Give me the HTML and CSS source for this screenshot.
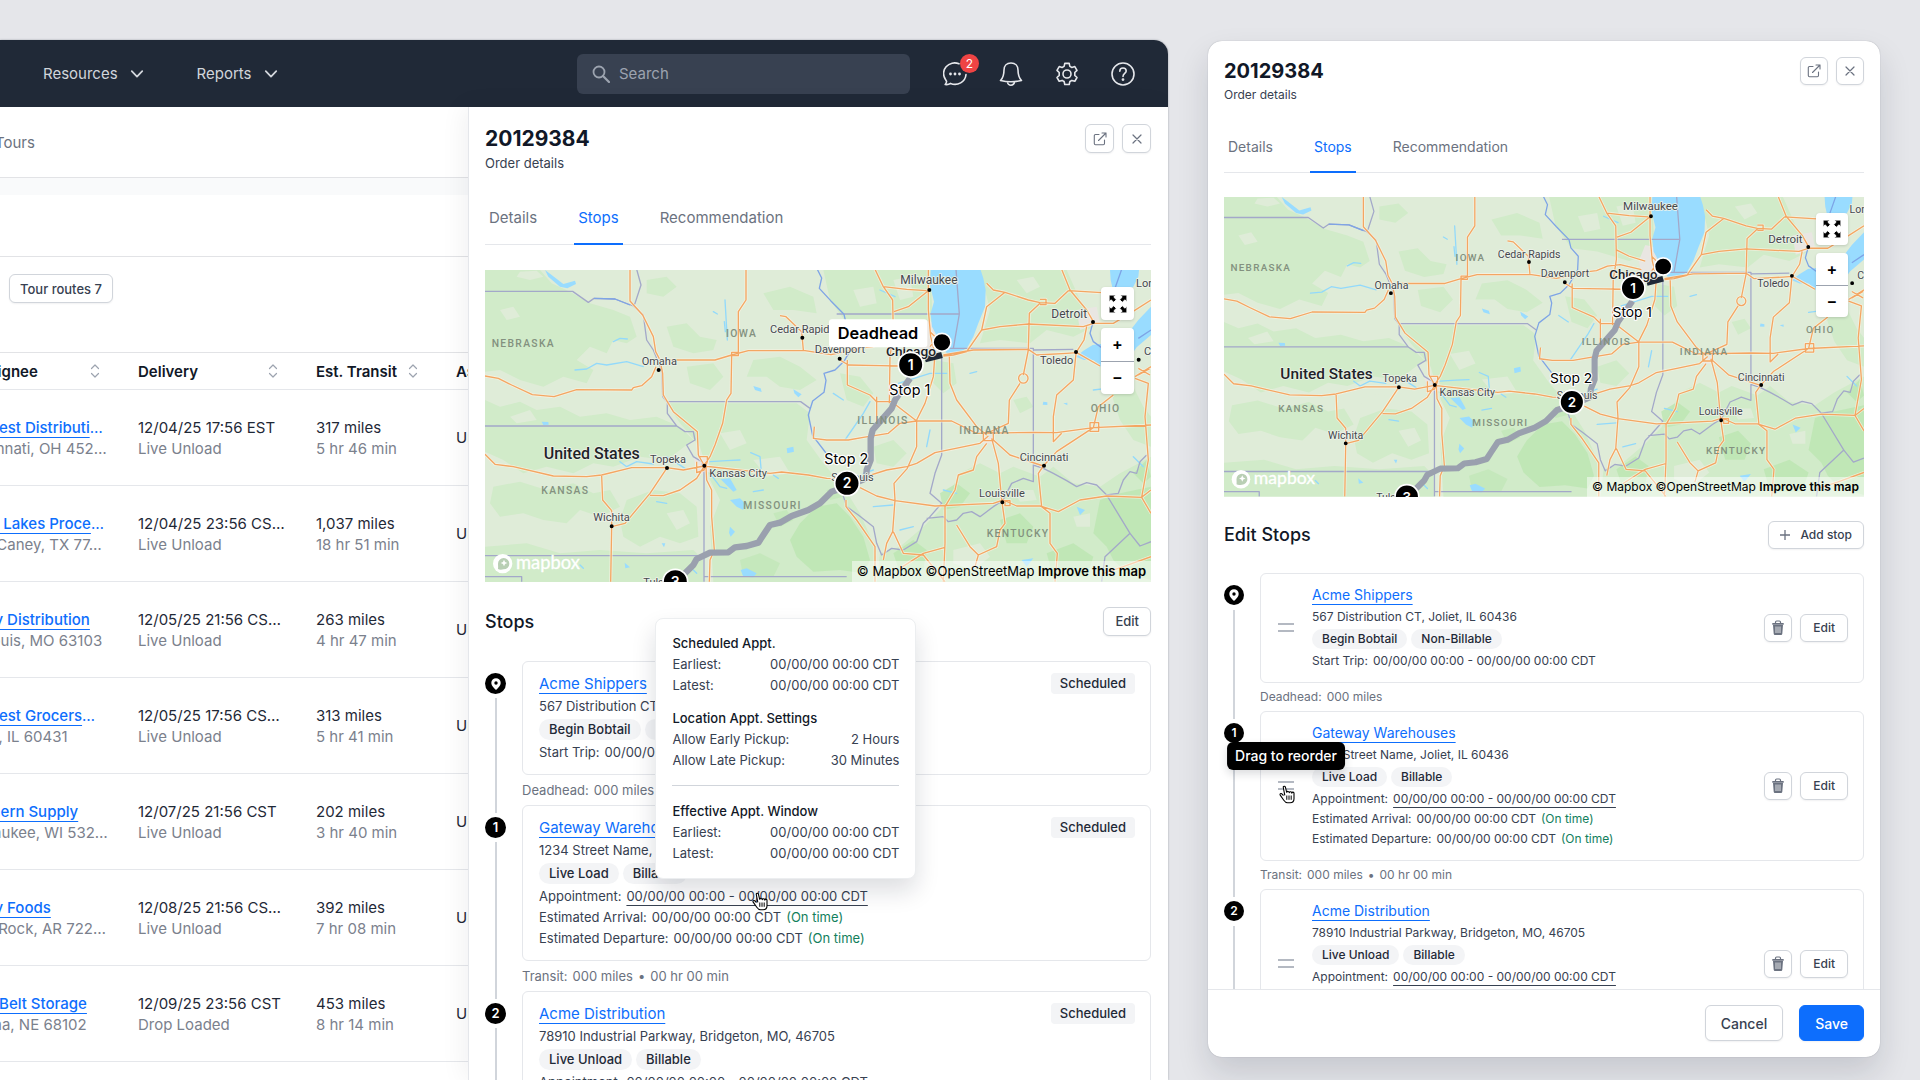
FILE: index.html
```html
<!DOCTYPE html>
<html lang="en">
<head>
<meta charset="utf-8">
<title>Order 20129384</title>
<link rel="stylesheet" href="styles.css">
</head>
<body>
<svg class="defs" aria-hidden="true">
  <symbol id="i-down" viewBox="0 0 12 12"><path d="M1.5 3.5 6 8.2l4.500-4.700" fill="none" stroke="currentColor" stroke-width="1.500" stroke-linecap="round" stroke-linejoin="round"/></symbol>
  <symbol id="i-sort" viewBox="0 0 10 16"><path d="M1.500 5.500 5 2l3.500 3.500M1.500 10.500 5 14l3.500-3.500" fill="none" stroke="currentColor" stroke-width="1.200" stroke-linecap="round" stroke-linejoin="round"/></symbol>
  <symbol id="i-open" viewBox="0 0 14 14"><path d="M6 2.500H2.500a1.200 1.200 0 0 0-1.200 1.200v7.800a1.200 1.200 0 0 0 1.200 1.200h7.800a1.200 1.200 0 0 0 1.200-1.200V8M9 1h4v4M13 1 5.500 8.500" fill="none" stroke="currentColor" stroke-width="1.100" stroke-linecap="round" stroke-linejoin="round"/></symbol>
  <symbol id="i-close" viewBox="0 0 14 14"><path d="m3 3 8 8M11 3l-8 8" fill="none" stroke="currentColor" stroke-width="1.200" stroke-linecap="round"/></symbol>
  <symbol id="i-expand" viewBox="0 0 18 18"><path d="M1 1h6L5.200 2.800 7.500 5.100 5.100 7.500 2.800 5.200 1 7zM17 1v6l-1.800-1.800-2.300 2.300-2.400-2.400 2.300-2.300L11 1zM1 17v-6l1.800 1.800 2.300-2.300 2.400 2.400-2.300 2.300L7 17zM17 17h-6l1.800-1.800-2.300-2.300 2.400-2.400 2.300 2.300L17 11z" fill="#000" stroke="#fff" stroke-width=".8"/></symbol>
  <symbol id="i-pin" viewBox="0 0 20 20"><path d="M10 4.200a4.700 4.700 0 0 0-4.700 4.700c0 2.800 2.700 5 4.700 7 2-2 4.700-4.200 4.700-7A4.700 4.700 0 0 0 10 4.200z" fill="#fff"/><circle cx="10" cy="9" r="1.700" fill="#000"/></symbol>
  <symbol id="i-trash" viewBox="0 0 14 16"><path d="M4.500 3V2.200C4.500 1.500 5 1 5.700 1h2.600c.7 0 1.200.5 1.200 1.200V3" fill="none" stroke="currentColor" stroke-width="1.200"/><path d="M1.300 3h11.400v1.700H1.300zM2 5h10l-.7 8.700c-.1.800-.7 1.300-1.500 1.300H4.200c-.8 0-1.400-.5-1.500-1.300z" fill="currentColor"/><path d="M5 6.500v6.500M7 6.500V13M9 6.500V13" stroke="#fff" stroke-width=".8"/></symbol>
  <symbol id="i-grip" viewBox="0 0 18 12"><path d="M1 2h16M1 9h16" stroke="#9ca3af" stroke-width="1.500" fill="none"/></symbol>
  <symbol id="i-hand" viewBox="0 0 18 20"><path d="M5.500 11.500 3.800 9.800C2.800 9 1.500 10 2.200 11.100l3.600 5.200c1.100 1.600 2 2.500 3.700 2.500h2.600c2.300 0 3.900-1.700 3.900-4V9.300c0-1.500-2-1.500-2.200-.2-.1-1.600-2.200-1.800-2.500-.5C11 7.200 9.200 7 8.700 8.300L7.400 3.200C7 1.700 5 2 5.300 3.500l1.500 7.800" fill="#fff" stroke="#000" stroke-width="1.100" stroke-linejoin="round"/><path d="M8.800 11.500v4.300M11 11.500v4.300M13.200 11.500v4.300" stroke="#000" stroke-width="1"/></symbol>

  <symbol id="land" viewBox="15 30 1998 936" preserveAspectRatio="none">
    <rect x="15" y="30" width="1998" height="936" fill="#dfecd8"/>
    <g fill="#d1ebc9">
      <path d="M15 30H180L215 70 270 95 330 130 400 150 450 170 470 230 440 250 400 240 380 280 330 260 290 300 340 330 320 370 250 350 190 380 120 360 60 330 15 335zM15 420 60 440 120 425 170 450 240 440 300 470 380 460 450 480 530 470 600 500 640 540 600 570 560 600 480 590 400 620 340 610 280 640 200 620 130 640 70 600 15 575zM40 680 120 665 200 690 280 670 340 700 390 690 420 740 360 770 300 750 260 790 190 780 130 760 60 770 30 730zM440 720 520 690 600 700 650 740 655 830 600 850 540 830 480 860 430 830 420 780z"/>
      <path d="M560 430H950L990 460 980 540 1030 610 1090 680 1140 760 1180 850 1190 966H700L690 800 720 720 690 660 660 560 600 490zM560 200 620 190 660 230 710 240 700 270 640 280 580 260zM820 300 900 290 960 320 1010 360 960 390 900 380 860 350 800 350zM620 320 700 310 730 350 690 390 630 370zM500 60 560 50 590 80 550 110 500 100zM850 100 930 80 1000 110 1010 160 940 150 880 150z"/>
      <path d="M15 860 140 850 240 880 360 870 500 880 640 870 670 900V966H15zM1030 30H1350L1360 200 1280 230 1180 200 1100 190 1050 120z"/>
      <path d="M1500 30H1760L1800 120 1840 200 1780 230 1700 210 1650 250 1560 240 1500 250 1530 150zM1360 300 1420 310 1430 370 1390 400 1360 370zM1440 640 1500 610 1560 640 1600 620 1680 650 1720 620 1780 670 1860 680 1920 640 2013 590V966H1190L1200 880 1260 860 1330 800 1380 750z"/>
      <path d="M1080 340 1140 350 1180 400 1150 440 1100 420zM1180 560 1240 540 1280 580 1240 620 1190 610zM1600 420 1640 410 1660 440 1620 460zM1880 360 1960 380 1990 440 2013 470V560L1960 540 1920 480 1900 420z"/>
    </g>
    <g fill="#bce6b1">
      <path d="M960 790 1010 740 1070 730 1110 770 1150 830 1170 900 1150 940 1080 930 1000 935 950 890 930 840zM1860 720 1920 700 2013 680V960L1940 940 1900 900 1880 860 1840 820zM1240 880 1300 840 1340 870 1330 930 1260 940zM1560 780 1620 760 1660 800 1640 850 1580 850zM1700 880 1780 850 1840 890 1820 950 1720 950zM1380 700 1430 670 1470 700 1440 740 1390 750zM2000 600 1960 640 1990 670 2013 650z" opacity=".8"/>
      <path d="M880 760 920 750 940 780 900 800zM780 900 840 880 900 910 880 950 790 950zM1040 690 1080 680 1090 710 1050 720z" opacity=".55"/>
    </g>
    <g fill="#dfecd8">
      <path d="M120 35 170 32 190 50 150 60 110 50zM60 150 100 140 120 170 80 180zM90 470 150 450 170 480 110 490zM440 640 520 650 540 690 480 690 430 670zM600 600 630 610 625 640 590 630zM720 520 780 510 800 550 750 570zM820 600 900 590 930 640 860 650zM560 760 610 750 630 790 590 810zM1420 870 1500 850 1530 890 1480 930 1420 910zM1600 690 1660 690 1670 720 1620 725zM1780 770 1830 760 1830 800 1790 800zM1120 90 1180 80 1190 130 1140 140zM1240 60 1290 50 1300 110 1260 120zM1610 60 1660 50 1680 80 1640 100z"/>
    </g>
    <g fill="#e9e6e2"><path d="M1330 180 1375 190 1385 260 1360 300 1320 290 1310 230zM1790 150 1850 140 1860 190 1800 210zM640 595 685 590 690 635 655 645zM1505 530 1540 525 1540 550 1510 552z"/></g>
    <g fill="#99dcff">
      <path d="M1352 30 1350 75 1362 125 1352 160 1356 200 1372 230 1390 262 1405 288 1432 285 1462 262 1480 230 1495 190 1515 140 1517 90 1510 55 1502 30zM1890 30 1892 60 1900 95 1925 105 1960 80 1975 50 1977 30zM1788 290 1810 272 1838 255 1880 250 1935 232 1975 180 2013 140V225L1970 262 1950 290 1920 318 1880 330 1865 322 1840 300 1812 300z"/>
      <path d="M195 30 215 45 250 72 285 62 288 72 262 85 240 80 205 50zM185 485 205 486 206 494 190 495zM820 378 842 385 845 396 825 390zM940 388 965 403 955 412 943 400zM750 720 780 715 795 730 790 750 770 740zM782 930 800 925 830 940 820 952 790 950zM750 800 765 815 752 830 747 818zM722 658 750 655 770 690 760 695zM920 565 940 560 942 575 922 580zM1625 900 1660 895 1640 920zM1790 740 1815 750 1800 765zM1690 425 1702 427 1702 435 1688 434zM1750 430 1762 428 1762 436zM545 850 556 850 552 862zM434 908 450 922 436 925z"/>
    </g>
    <g fill="none" stroke="#92d9fb" stroke-width="4" stroke-linecap="round" stroke-linejoin="round">
      <path d="M285 330 320 327 350 310 380 315 440 305 490 320M400 245 420 235 442 237M700 155 712 162M733 185 736 215M735 120 742 240M420 605 440 620 470 605 520 612M690 605 740 602 780 600M812 578 840 590 843 625M690 640 720 680 740 685M880 645 895 655M530 725 560 730M1060 400 1090 420M1095 540 1150 460 1170 425M1255 370 1350 340 1400 340M1180 740 1240 735M1350 510 1340 560M1200 90 1245 110M560 590 615 625M1470 340 1490 335M1390 690 1430 700M1260 810 1300 800M1840 390 1880 385M1960 590 1990 620M1150 640 1180 630M820 695 850 690M300 915 310 925M640 930 650 940"/>
    </g>
    <g fill="none" stroke="#a3a8c9" stroke-width="4" stroke-linejoin="round">
      <path d="M15 94H278L325 127 342 115 405 117 460 138 490 165 500 240 520 270 545 330 548 410 560 425H962L990 445M15 498H590L562 460V425M590 498 615 515 640 515 645 540 620 555 640 590 665 605 672 630V965M470 28 483 75 465 130 460 138M15 887H672M15 950H125V965M670 950H1100"/>
      <path d="M1079 673 1100 740 1135 765 1180 800 1190 850 1205 885 1235 865 1270 870 1310 845 1330 790 1350 770 1385 730 1350 700 1365 640 1385 585V285M1340 775 1390 770 1405 785 1430 780 1450 760 1475 755 1500 770 1520 755 1540 740 1568 722 1595 670 1630 655 1660 665V615L1690 625 1720 640 1760 662 1790 680 1820 668 1850 675 1880 705 1915 700 1930 660 1950 635 1970 640 1980 605 2000 585"/>
      <path d="M1070 162H1438L1428 28M1438 162 1420 265M1385 265H1660V610M1660 270 1780 268M1880 705 1950 820 1875 890 1865 965M1950 820 1980 858 2013 845"/>
    </g>
    <g fill="none" stroke="#7ea4e6" stroke-width="4" stroke-linejoin="round">
      <path d="M342 115 405 117 450 135M1012 28 1025 54 1018 85 1052 122 1092 163 1098 189 1121 215 1119 257 1092 304 1065 330 1032 340 1038 361 1032 397 998 423 985 465 998 527 1038 579M1925 28 1905 85M1838 190 1830 220 1840 245 1868 265M1975 235 2013 210"/>
    </g>
    <g id="roads" fill="none" stroke="#faf3e4" stroke-width="9" stroke-linejoin="round" opacity=".7"><use href="#road-lines"/></g>
    <g fill="none" stroke="#f4a662" stroke-width="4" stroke-linejoin="round"><path id="road-lines" d="M15 348 55 355 95 375 157 404 222 410 290 389 455 390 460 383 485 377 515 350 528 320M450 28V123L488 165 520 230 527 275 540 300 548 340 550 405 580 455 652 515 655 585 672 615M560 300H705L755 285 805 272H975L1053 284 1159 262 1178 260 1212 246 1252 241 1318 257M798 28V120L775 155V287H755V277H775M755 285 753 400 740 420 728 490 705 555 690 590 675 612M900 167 918 170 965 215 970 270M15 583 45 613 100 620 220 648 320 650 365 645 455 623H560L610 630 672 618 760 628 870 640 905 636 985 645 1040 655 1100 656M365 648 368 720 395 752V800L392 965M395 800 435 790 510 700 560 625M510 706 550 707 600 690 650 655 672 620M678 620 680 660 695 690V770L703 870 690 900 688 965M655 590H682V605L672 630 650 638V605M1003 500 1000 535 1040 540 1105 540 1150 532 1225 520 1260 490 1310 483M1185 28 1210 80 1238 120 1240 225 1230 290 1228 430M1210 80 1280 88 1340 92M1242 155 1285 140 1345 92M1345 28V150L1352 230 1365 280 1360 350 1335 430 1310 480 1310 560 1282 625 1242 670 1245 720 1238 815 1220 850 1210 900M1240 195 1280 215 1330 230M1080 300 1105 315 1200 317 1260 318M1102 300V375L1170 405 1190 425 1235 425 1310 483 1415 483 1490 520 1660 517 1730 518 1840 503 2013 495M1190 410V500M1520 70 1540 90 1575 97 1645 120 1680 128 1725 130 1765 92M1745 28 1770 90 1820 150 1840 185M1765 92 1865 98M1575 97 1520 140 1505 210 1460 275 1420 285 1390 288M1505 210 1560 200 1645 192 1810 200 1840 190 1900 190 1950 160 2013 120M1680 130 1648 160 1645 270 1630 345M1620 370 1588 420 1585 490 1520 520M1390 285 1480 270 1645 268 1670 285 1760 280 1790 278 1860 318M1788 280 1780 360 1730 405 1720 470V545L1745 520M1820 200 1812 240 1790 275M1408 290 1410 370 1430 420 1490 500 1520 525M1310 610 1365 578 1500 550 1525 528M1520 550 1490 590 1480 630 1435 645 1425 690 1395 740V850L1390 965M1535 535 1555 610 1565 720 1575 790 1560 810 1550 860 1495 885 1470 860 1430 795M1540 540 1590 585 1690 618 1730 575 1840 503 1855 440 1900 405M1690 618 1675 640 1685 740 1710 760V850L1732 880 1725 965M1140 683 1190 708 1245 722 1365 738 1540 730 1570 720 1610 738 1680 738 1735 755 1800 720 1880 708 1985 712 2013 690M1985 712 2013 760M1140 655 1220 630 1280 620 1310 610M1098 720V740L1130 780 1185 860V965M1240 815 1270 880 1330 885 1395 965M1260 925 1330 880 1395 862M1495 885 1485 920M1965 350 2013 320M1965 355 2005 370 1995 470 2005 600 1985 712M1640 345A13 13 0 1 1 1620 365 13 13 0 0 1 1640 345M1830 488h26v26h-26zM1510 518h30v24h-30zM1575 722h15v15h-15zM1680 118h18v16h-18M1975 325 2010 345M1975 345 2010 325M1350 215 1370 235 1350 260M1870 940 1930 920 2013 890"/></g>
    <g fill="none" stroke="#9aa0ae" stroke-width="19" stroke-linejoin="round"><path d="M1290 355 1245 420 1235 445 1178 510 1172 535V600L1160 630 1158 655 1135 665"/><path d="M1085 685 1055 695 1020 730 985 750 935 768 900 788 870 795 850 825 835 848 800 858 765 862 745 877 690 878 650 897 640 915 615 940"/></g>
    <path d="M1335 298 1386 285" stroke="#1f2937" stroke-width="18"/>
  </symbol>
</svg>

<main class="stage">
  <section class="app">
    <header class="topbar">
      <nav class="menus" aria-label="Main">
        <button class="menu" type="button">Resources <svg width="14" height="14"><use href="#i-down"/></svg></button>
        <button class="menu" type="button">Reports <svg width="14" height="14"><use href="#i-down"/></svg></button>
      </nav>
      <label class="search">
        <svg width="18" height="18" viewBox="0 0 18 18" fill="none" stroke="currentColor" aria-hidden="true"><circle cx="7" cy="7" r="5.500" stroke-width="1.800"/><path d="m11 11 6 6" stroke-width="2.200" stroke-linecap="round"/></svg>
        <input type="search" placeholder="Search" aria-label="Search">
      </label>
      <div class="tools">
        <button class="tool" type="button" aria-label="Messages">
          <svg width="24" height="24" viewBox="0 0 24 24" fill="none" stroke="currentColor" stroke-width="1.600" stroke-linecap="round" stroke-linejoin="round"><path d="M16 1.800A11 10.600 0 0 0 2.500 17.500L3.600 19.300a5 5 0 0 1-1.400 3.200c2 .3 4-.1 5.300-1.100A11 10.600 0 0 0 23 12.500"/><g fill="currentColor" stroke="none"><circle cx="7.500" cy="12" r="1.400"/><circle cx="12" cy="12" r="1.400"/><circle cx="16.500" cy="12" r="1.400"/></g></svg>
          <span class="badge">2</span>
        </button>
        <button class="tool" type="button" aria-label="Notifications"><svg width="24" height="24" viewBox="0 0 24 24" fill="none" stroke="currentColor" stroke-width="1.600" stroke-linecap="round" stroke-linejoin="round"><path d="M12 1C7.500 1 5 4.200 5 8c0 5-1 8-3.500 10.500 6.500 1.500 14.500 1.500 21 0C20 16 19 13 19 8c0-3.800-2.500-7-7-7zM8.500 19.700a3.500 3.500 0 0 0 7 0"/></svg></button>
        <button class="tool" type="button" aria-label="Settings"><svg width="24" height="24" viewBox="0 0 24 24" fill="none" stroke="currentColor" stroke-width="1.600" stroke-linejoin="round"><path d="M9.800 1h4.400l.7 3 2 1.100 2.900-.9 2.200 3.800-2.200 2.100V13l2.200 2.100-2.200 3.800-2.900-.9-2 1.100-.7 3H9.800l-.7-3-2-1.100-2.900.9L2 15.100 4.200 13v-2.900L2 8l2.200-3.800 2.900.9 2-1.100z" transform="translate(0 .4)"/><circle cx="12" cy="12" r="4"/></svg></button>
        <button class="tool" type="button" aria-label="Help"><svg width="24" height="24" viewBox="0 0 24 24" fill="none" stroke="currentColor" stroke-width="1.600" stroke-linecap="round"><circle cx="12" cy="12" r="11"/><path d="M8.800 9.200C8.800 7.200 10.200 6 12 6s3.200 1.200 3.200 3c0 2.400-3.200 2.600-3.200 5.400"/><circle cx="12" cy="17.600" r=".6" fill="currentColor"/></svg></button>
      </div>
    </header>

    <div class="workspace">
      <div class="orders">
        <div class="orders-tabs"><a href="#tours">Tours</a></div>
        <div class="band"></div>
        <div class="summary"></div>
        <div class="filters"><button class="btn" type="button">Tour routes 7</button></div>
        <table class="grid">
          <colgroup><col class="c-wide"><col class="c-wide"><col class="c-mid"><col class="c-mid"></colgroup>
          <thead><tr>
            <th><span class="th">Consignee <svg width="10" height="16"><use href="#i-sort"/></svg></span></th>
            <th><span class="th">Delivery <svg width="10" height="16"><use href="#i-sort"/></svg></span></th>
            <th><span class="th">Est. Transit <svg width="10" height="16"><use href="#i-sort"/></svg></span></th>
            <th><span class="th">Assigned</span></th>
          </tr></thead>
          <tbody>
            <tr><td><a class="link" href="#c1">Midwest Distributi</a><span class="more">…</span><p>Cincinnati, OH 452…</p></td><td>12/04/25 17:56 EST<p>Live Unload</p></td><td>317 miles<p>5 hr 46 min</p></td><td>Unassigned</td></tr>
            <tr><td><a class="link" href="#c2">Great Lakes Proce</a><span class="more">…</span><p>New Caney, TX 77…</p></td><td>12/04/25 23:56 CS…<p>Live Unload</p></td><td>1,037 miles<p>18 hr 51 min</p></td><td>Unassigned</td></tr>
            <tr><td><a class="link" href="#c3">Valley Distribution</a><p>St. Louis, MO 63103</p></td><td>12/05/25 21:56 CS…<p>Live Unload</p></td><td>263 miles<p>4 hr 47 min</p></td><td>Unassigned</td></tr>
            <tr><td><a class="link" href="#c4">Midwest Grocers</a><span class="more">…</span><p>Joliet, IL 60431</p></td><td>12/05/25 17:56 CS…<p>Live Unload</p></td><td>313 miles<p>5 hr 41 min</p></td><td>Unassigned</td></tr>
            <tr><td><a class="link" href="#c5">Northern Supply</a><p>Milwaukee, WI 532…</p></td><td>12/07/25 21:56 CST<p>Live Unload</p></td><td>202 miles<p>3 hr 40 min</p></td><td>Unassigned</td></tr>
            <tr><td><a class="link" href="#c6">Valley Foods</a><p>Little Rock, AR 722…</p></td><td>12/08/25 21:56 CS…<p>Live Unload</p></td><td>392 miles<p>7 hr 08 min</p></td><td>Unassigned</td></tr>
            <tr><td><a class="link" href="#c7">Corn Belt Storage</a><p>Omaha, NE 68102</p></td><td>12/09/25 23:56 CST<p>Drop Loaded</p></td><td>453 miles<p>8 hr 14 min</p></td><td>Unassigned</td></tr>
          </tbody>
        </table>
      </div>

      <aside class="panel panel-view">
        <header class="panel-head">
          <div><h1>20129384</h1><p class="sub">Order details</p></div>
          <div class="actions">
            <button class="btn square" type="button" aria-label="Open in new window"><svg width="14" height="14"><use href="#i-open"/></svg></button>
            <button class="btn square" type="button" aria-label="Close"><svg width="14" height="14"><use href="#i-close"/></svg></button>
          </div>
        </header>
        <nav class="tabs" aria-label="Order sections"><a href="#details">Details</a><a class="on" href="#stops">Stops</a><a href="#rec">Recommendation</a></nav>
        <div class="map">
          <svg class="map-art" viewBox="15 30 1998 936" role="img" aria-label="Route map">
            <use href="#land" x="15" y="30" width="1998" height="936"/>
            <g class="state"><text x="35" y="261">NEBRASKA</text><text x="738" y="231">IOWA</text><text x="184" y="702">KANSAS</text><text x="790" y="746">MISSOURI</text><text x="1132" y="491">ILLINOIS</text><text x="1438" y="522">INDIANA</text><text x="1832" y="455">OHIO</text><text x="1520" y="831">KENTUCKY</text></g>
            <g class="dots"><path d="M967 233v.1M536 330v.1M561 624v.1M673 617v.1M395 799v.1M1079 296v.1M1348 90v.1M1839 186v.1M1788 276v.1M1976 299v.1M1692 617v.1M1567 727v.1"/></g>
            <g class="city"><text x="870" y="219">Cedar Rapids</text><text x="485" y="316">Omaha</text><text x="510" y="609">Topeka</text><text x="688" y="651">Kansas City</text><text x="340" y="784">Wichita</text><text x="1004" y="279">Davenport</text><text x="1680" y="312">Toledo</text><text x="1968" y="81">London</text><text x="1992" y="285">Cleveland</text><text x="1619" y="603">Cincinnati</text><text x="1497" y="712">Louisville</text><text x="1054" y="662">St. Louis</text><text x="490" y="978">Tulsa</text></g>
            <g class="city metro"><text x="1261" y="71">Milwaukee</text><text x="1714" y="174">Detroit</text></g>
            <g class="big"><text x="191" y="597">United States</text><text class="chi" x="1218" y="287">Chicago</text></g>
            <g class="stopname"><text x="1228" y="404">Stop 1</text><text x="1033" y="611">Stop 2</text></g>
            <g class="mark"><circle cx="1386" cy="247" r="27"/><circle cx="1292" cy="314" r="37"/><circle cx="1101" cy="670" r="37"/><circle cx="586" cy="965" r="37"/></g>
            <g class="marknum"><text x="1292" y="329">1</text><text x="1101" y="685">2</text><text x="586" y="982">3</text></g>
            <rect class="tag" x="1047" y="178" width="295" height="84" rx="9"/><text class="tagtext" x="1194" y="237">Deadhead</text>
            <g class="logo"><circle cx="68" cy="911" r="29"/><path d="M54 911a17 17 0 1 1 17 17c-6 2-13 2-17-1 1-5 0-11 0-16z"/><path class="star" d="m72 899 3 7 7 3-7 3-3 7-3-7-7-3 7-3z"/><text x="108" y="926">mapbox</text></g>
          </svg>
          <div class="map-controls">
            <button type="button" aria-label="Full screen"><svg width="20" height="20"><use href="#i-expand"/></svg></button>
            <div class="zoom"><button type="button">+</button><button type="button">−</button></div>
          </div>
          <p class="credit"><a href="#m">© Mapbox</a> <a href="#o">©OpenStreetMap</a> <a class="improve" href="#i">Improve this map</a></p>
        </div>
        <div class="section-head"><h2>Stops</h2><button class="btn" type="button">Edit</button></div>
        <ol class="stops">
          <li>
            <span class="node"><svg width="20" height="20"><use href="#i-pin"/></svg></span>
            <article class="card"><div class="info">
              <h3><a class="link" href="#s0">Acme Shippers</a></h3><p>567 Distribution CT, Joliet, IL 60436</p>
              <div class="chips"><span>Begin Bobtail</span><span>Non-Billable</span></div>
              <div class="times"><p><span>Start Trip:</span><span>00/00/00 00:00 - 00/00/00 00:00 CDT</span></p></div>
            </div><span class="status">Scheduled</span></article>
            <p class="leg"><span>Deadhead:</span><span>000 miles</span></p>
          </li>
          <li>
            <span class="node">1</span>
            <article class="card"><div class="info">
              <h3><a class="link" href="#s1">Gateway Warehouses</a></h3><p>1234 Street Name, Joliet, IL 60436</p>
              <div class="chips"><span>Live Load</span><span>Billable</span></div>
              <div class="times">
                <div class="row"><span>Appointment:</span><span class="anchor"><span class="appt">00/00/00 00:00 - 00/00/00 00:00 CDT</span>
                  <span class="popover" role="tooltip">
                    <span class="group"><b>Scheduled Appt.</b><span class="pair"><span>Earliest:</span><span>00/00/00 00:00 CDT</span></span><span class="pair"><span>Latest:</span><span>00/00/00 00:00 CDT</span></span></span>
                    <span class="group"><b>Location Appt. Settings</b><span class="pair"><span>Allow Early Pickup:</span><span>2 Hours</span></span><span class="pair"><span>Allow Late Pickup:</span><span>30 Minutes</span></span></span>
                    <span class="group ruled"><b>Effective Appt. Window</b><span class="pair"><span>Earliest:</span><span>00/00/00 00:00 CDT</span></span><span class="pair"><span>Latest:</span><span>00/00/00 00:00 CDT</span></span></span>
                  </span>
                  <svg class="hand" width="18" height="20"><use href="#i-hand"/></svg></span></div>
                <p><span>Estimated Arrival:</span><span>00/00/00 00:00 CDT</span><span class="ok">(On time)</span></p>
                <p><span>Estimated Departure:</span><span>00/00/00 00:00 CDT</span><span class="ok">(On time)</span></p>
              </div>
            </div><span class="status">Scheduled</span></article>
            <p class="leg"><span>Transit:</span><span>000 miles</span><span>•</span><span>00 hr 00 min</span></p>
          </li>
          <li>
            <span class="node">2</span>
            <article class="card"><div class="info">
              <h3><a class="link" href="#s2">Acme Distribution</a></h3><p>78910 Industrial Parkway, Bridgeton, MO, 46705</p>
              <div class="chips"><span>Live Unload</span><span>Billable</span></div>
              <div class="times"><p><span>Appointment:</span><span class="appt">00/00/00 00:00 - 00/00/00 00:00 CDT</span></p></div>
            </div><span class="status">Scheduled</span></article>
            <p class="leg"></p>
          </li>
        </ol>
      </aside>
    </div>
  </section>

  <aside class="sheet">
    <div class="panel panel-edit">
      <header class="panel-head">
        <div><h1>20129384</h1><p class="sub">Order details</p></div>
        <div class="actions">
          <button class="btn square" type="button" aria-label="Open in new window"><svg width="14" height="14"><use href="#i-open"/></svg></button>
          <button class="btn square" type="button" aria-label="Close"><svg width="14" height="14"><use href="#i-close"/></svg></button>
        </div>
      </header>
      <nav class="tabs" aria-label="Order sections"><a href="#details">Details</a><a class="on" href="#stops">Stops</a><a href="#rec">Recommendation</a></nav>
      <div class="map">
        <svg class="map-art" viewBox="15 30 1998 936" role="img" aria-label="Route map">
          <use href="#land" x="15" y="30" width="1998" height="936"/>
          <g class="state"><text x="35" y="261">NEBRASKA</text><text x="738" y="231">IOWA</text><text x="184" y="702">KANSAS</text><text x="790" y="746">MISSOURI</text><text x="1132" y="491">ILLINOIS</text><text x="1438" y="522">INDIANA</text><text x="1832" y="455">OHIO</text><text x="1520" y="831">KENTUCKY</text></g>
          <g class="dots"><path d="M967 233v.1M536 330v.1M561 624v.1M673 617v.1M395 799v.1M1079 296v.1M1348 90v.1M1839 186v.1M1788 276v.1M1976 299v.1M1692 617v.1M1567 727v.1"/></g>
          <g class="city"><text x="870" y="219">Cedar Rapids</text><text x="485" y="316">Omaha</text><text x="510" y="609">Topeka</text><text x="688" y="651">Kansas City</text><text x="340" y="784">Wichita</text><text x="1004" y="279">Davenport</text><text x="1680" y="312">Toledo</text><text x="1968" y="81">London</text><text x="1992" y="285">Cleveland</text><text x="1619" y="603">Cincinnati</text><text x="1497" y="712">Louisville</text><text x="1054" y="662">St. Louis</text><text x="490" y="978">Tulsa</text></g>
          <g class="city metro"><text x="1261" y="71">Milwaukee</text><text x="1714" y="174">Detroit</text></g>
          <g class="big"><text x="191" y="597">United States</text><text class="chi" x="1218" y="287">Chicago</text></g>
          <g class="stopname"><text x="1228" y="404">Stop 1</text><text x="1033" y="611">Stop 2</text></g>
          <g class="mark"><circle cx="1386" cy="247" r="27"/><circle cx="1292" cy="314" r="37"/><circle cx="1101" cy="670" r="37"/><circle cx="586" cy="965" r="37"/></g>
          <g class="marknum"><text x="1292" y="329">1</text><text x="1101" y="685">2</text><text x="586" y="982">3</text></g>
          <g class="logo"><circle cx="68" cy="911" r="29"/><path d="M54 911a17 17 0 1 1 17 17c-6 2-13 2-17-1 1-5 0-11 0-16z"/><path class="star" d="m72 899 3 7 7 3-7 3-3 7-3-7-7-3 7-3z"/><text x="108" y="926">mapbox</text></g>
        </svg>
        <div class="map-controls">
          <button type="button" aria-label="Full screen"><svg width="20" height="20"><use href="#i-expand"/></svg></button>
          <div class="zoom"><button type="button">+</button><button type="button">−</button></div>
        </div>
        <p class="credit"><a href="#m">© Mapbox</a> <a href="#o">©OpenStreetMap</a> <a class="improve" href="#i">Improve this map</a></p>
      </div>
      <div class="section-head"><h2>Edit Stops</h2><button class="btn add" type="button"><svg width="10" height="10" viewBox="0 0 10 10"><path d="M5 0v10M0 5h10" stroke="#6b7280" stroke-width="1.300"/></svg>Add stop</button></div>
      <ol class="stops">
        <li>
          <span class="node"><svg width="20" height="20"><use href="#i-pin"/></svg></span>
          <article class="card"><span class="grip"><svg width="18" height="12"><use href="#i-grip"/></svg></span><div class="info">
            <h3><a class="link" href="#e0">Acme Shippers</a></h3><p>567 Distribution CT, Joliet, IL 60436</p>
            <div class="chips"><span>Begin Bobtail</span><span>Non-Billable</span></div>
            <div class="times"><p><span>Start Trip:</span><span>00/00/00 00:00 - 00/00/00 00:00 CDT</span></p></div>
          </div><div class="actions"><button class="btn square" type="button" aria-label="Delete stop"><svg width="14" height="16"><use href="#i-trash"/></svg></button><button class="btn" type="button">Edit</button></div></article>
          <p class="leg"><span>Deadhead:</span><span>000 miles</span></p>
        </li>
        <li>
          <span class="node">1</span>
          <article class="card"><span class="grip"><svg width="18" height="12"><use href="#i-grip"/></svg><span class="tip" role="tooltip">Drag to reorder</span><svg class="hand" width="18" height="20"><use href="#i-hand"/></svg></span><div class="info">
            <h3><a class="link" href="#e1">Gateway Warehouses</a></h3><p>1234 Street Name, Joliet, IL 60436</p>
            <div class="chips"><span>Live Load</span><span>Billable</span></div>
            <div class="times">
              <p><span>Appointment:</span><span class="appt">00/00/00 00:00 - 00/00/00 00:00 CDT</span></p>
              <p><span>Estimated Arrival:</span><span>00/00/00 00:00 CDT</span><span class="ok">(On time)</span></p>
              <p><span>Estimated Departure:</span><span>00/00/00 00:00 CDT</span><span class="ok">(On time)</span></p>
            </div>
          </div><div class="actions"><button class="btn square" type="button" aria-label="Delete stop"><svg width="14" height="16"><use href="#i-trash"/></svg></button><button class="btn" type="button">Edit</button></div></article>
          <p class="leg"><span>Transit:</span><span>000 miles</span><span>•</span><span>00 hr 00 min</span></p>
        </li>
        <li>
          <span class="node">2</span>
          <article class="card"><span class="grip"><svg width="18" height="12"><use href="#i-grip"/></svg></span><div class="info">
            <h3><a class="link" href="#e2">Acme Distribution</a></h3><p>78910 Industrial Parkway, Bridgeton, MO, 46705</p>
            <div class="chips"><span>Live Unload</span><span>Billable</span></div>
            <div class="times">
              <p><span>Appointment:</span><span class="appt">00/00/00 00:00 - 00/00/00 00:00 CDT</span></p>
              <p><span>Estimated Arrival:</span><span>00/00/00 00:00 CDT</span><span class="ok">(On time)</span></p>
              <p><span>Estimated Departure:</span><span>00/00/00 00:00 CDT</span><span class="ok">(On time)</span></p>
            </div>
          </div><div class="actions"><button class="btn square" type="button" aria-label="Delete stop"><svg width="14" height="16"><use href="#i-trash"/></svg></button><button class="btn" type="button">Edit</button></div></article>
          <p class="leg"></p>
        </li>
      </ol>
    </div>
    <footer class="sheet-foot"><button class="btn large" type="button">Cancel</button><button class="btn large primary" type="button">Save</button></footer>
  </aside>
</main>
</body>
</html>
```

FILE: styles.css
```css
* { box-sizing: border-box; }

body {
  margin: 0;
  height: 100vh;
  overflow: hidden;
  background: #e5e6ea;
  color: #374151;
  font-family: Inter, "Liberation Sans", sans-serif;
  font-size: 14px;
}

h1, h2, h3, p, ol { margin: 0; padding: 0; }
ol { list-style: none; }
a { color: inherit; text-decoration: none; }
button, input { font: inherit; color: inherit; }
button { padding: 0; border: 0; background: none; cursor: pointer; }
svg { flex: none; }
.defs { display: none; }

.stage {
  display: flex;
  gap: 40px;
  height: 100%;
  padding: 40px 40px 0 0;
}

/* Left window */
.app {
  flex: 1;
  min-width: 0;
  display: flex;
  flex-direction: column;
  overflow: hidden;
  background: #fff;
  border-radius: 0 14px 0 0;
  box-shadow: 0 0 2px rgba(31, 41, 55, .4);
}

.topbar {
  flex: none;
  display: flex;
  align-items: center;
  height: 67px;
  padding: 0 33px 0 43px;
  background: #202937;
  color: #d1d5db;
}
.menus { display: flex; flex: 1; gap: 53px; }
.menu { display: flex; align-items: center; gap: 12px; font-size: 15px; }
.search {
  display: flex;
  align-items: center;
  gap: 9px;
  width: 333px;
  height: 40px;
  padding: 0 15px;
  border-radius: 6px;
  background: #384151;
  color: #9ca3af;
}
.search input { flex: 1; min-width: 0; padding: 0; border: 0; outline: 0; background: none; font-size: 15px; }
.search input::placeholder { color: #9ca3af; opacity: 1; }
.tools { display: flex; gap: 32px; margin-left: 33px; }
.tool { position: relative; display: flex; color: #e5e7eb; }
.badge {
  position: absolute;
  top: -8px;
  right: -12px;
  width: 19px;
  height: 19px;
  border-radius: 50%;
  background: #ef4444;
  color: #fff;
  font-size: 12px;
  line-height: 19px;
  text-align: center;
}

.workspace { flex: 1; min-height: 0; display: flex; }

.orders { flex: 1; min-width: 0; overflow: hidden; font-size: 15px; }
.orders-tabs { height: 71px; padding-left: 9px; margin-left: -14px; border-bottom: 1px solid #e2e3e6; line-height: 71px; color: #6b7280; }
.band { height: 17px; background: #f9fafb; }
.summary { height: 62px; border-bottom: 1px solid #e2e3e6; }
.filters { display: flex; align-items: center; height: 95px; padding: 0 9px 32px; }
.filters .btn { height: 29px; padding: 0 10px; font-size: 13px; }

.grid { width: 636px; margin-left: -40px; border-collapse: collapse; table-layout: fixed; border-top: 1px solid #e2e3e6; color: #1f2937; }
.c-wide { width: 178px; }
.c-mid { width: 140px; }
.grid th { height: 37px; padding: 0; text-align: left; font-weight: 600; color: #111827; }
.th { display: flex; align-items: center; justify-content: space-between; padding-right: 38px; white-space: nowrap; }
.th svg { color: #9ca3af; }
.grid tr { border-bottom: 1px solid #e5e7eb; }
.grid td { height: 96px; padding: 0; line-height: 21px; white-space: nowrap; }
.grid p { color: #7b818d; }
.more { color: #0d6efd; }

.link { color: #0d6efd; text-decoration: underline; text-decoration-thickness: 1px; text-underline-offset: 4px; text-decoration-skip-ink: none; }
.grid .link { font-weight: 500; }

/* Order panel, shared by both views */
.panel {
  --line: 20px;
  --ctl: 28px;
  --pad: 16px;
  --block: 24px;
  --text: 12px;
  --label: 14px;
  font-size: var(--text);
  line-height: var(--line);
}
.panel-view {
  --line: 21px;
  --ctl: 29px;
  --pad: 17px;
  --block: 25px;
  --text: 13px;
  --label: 15px;
  width: min(700px, 60%);
  padding: var(--pad) 17px 0 16px;
  border-left: 1px solid #e5e7eb;
  box-shadow: -4px 0 24px rgba(17, 24, 39, .06);
  background: #fff;
}
.panel-edit { flex: 1; min-height: 0; overflow: hidden; padding: var(--pad) var(--pad) 0; }

.panel-head { display: flex; align-items: flex-start; justify-content: space-between; }
.panel h1 { font-size: 20px; line-height: var(--ctl); font-weight: 700; color: #111827; }
.panel-view h1 { font-size: 21px; }
.actions { display: flex; align-items: center; gap: 8px; }

.btn {
  display: inline-flex;
  align-items: center;
  justify-content: center;
  height: var(--ctl);
  padding: 0 11px;
  border: 1px solid #d1d5db;
  border-radius: 6px;
  background: #fff;
  box-shadow: 0 1px 2px rgba(17, 24, 39, .06);
  color: #374151;
  font-weight: 500;
  white-space: nowrap;
}
.panel-edit .card .btn:not(.square) { padding: 0 12px; }
.square { width: var(--ctl); padding: 0; color: #6b7280; }
.add { gap: 10px; }
.large { height: 36px; padding: 0 15px; font-size: 14px; }
.primary { border-color: #0d6efd; background: #0d6efd; color: #fff; }

.tabs { display: flex; gap: 33px; height: 52px; margin-top: var(--pad); box-shadow: inset 0 -1px #e5e7eb; font-size: var(--label); color: #6b7280; }
.panel-view .tabs { height: 54px; }
.tabs a { display: flex; align-items: center; padding: 0 4px; }
.panel-view .tabs a { padding-bottom: 2px; }
.tabs .on { color: #0d6efd; box-shadow: inset 0 -2px #0d6efd; }

/* Map */
.map { position: relative; margin-top: var(--block); overflow: hidden; }
.map-art { display: block; width: 100%; height: auto; font-family: Roboto, "Liberation Sans", sans-serif; }
.map-art text { paint-order: stroke; stroke-linejoin: round; }
.state { font-size: 31px; font-weight: 500; fill: #83917f; letter-spacing: 4px; }
.city { font-size: 33px; fill: #45484d; stroke: #eef3ea; stroke-width: 5px; }
.metro { font-size: 36px; }
.dots { fill: none; stroke: #000; stroke-width: 12px; stroke-linecap: round; }
.big { font-size: 48px; font-weight: 500; fill: #1f2328; stroke: #eef3ea; stroke-width: 5px; }
.chi { font-size: 41px; }
.stopname { font-family: Inter, sans-serif; font-size: 43px; fill: #000; stroke: #fff; stroke-width: 7px; }
.mark { fill: #000; stroke: #fff; stroke-width: 5px; }
.marknum { font-family: Inter, sans-serif; font-size: 42px; font-weight: 600; fill: #fff; text-anchor: middle; }
.tag { fill: #fff; }
.tagtext { font-family: Inter, sans-serif; font-size: 49px; font-weight: 600; fill: #000; text-anchor: middle; }
.logo { fill: #fff; }
.logo path { fill: #b9cfb4; }
.logo .star { fill: #fff; }
.logo text { font-family: Lato, sans-serif; font-size: 55px; font-weight: 400; stroke: #fff; stroke-width: 1px; }

.map-controls { position: absolute; top: var(--pad); right: var(--pad); display: grid; gap: 8px; }
.map-controls button { display: grid; place-items: center; width: calc(var(--ctl) + 4px); height: calc(var(--ctl) + 4px); border-radius: 4px; background: #fff; color: #000; font-size: 16px; font-weight: 600; box-shadow: 0 1px 3px rgba(0, 0, 0, .15); }
.zoom { background: #fff; border-radius: 4px; box-shadow: 0 1px 3px rgba(0, 0, 0, .15); }
.map-controls .zoom button { box-shadow: none; background: none; }
.map-controls .zoom button + button { box-shadow: inset 0 1px #9ca3af; border-radius: 0; }
.credit { position: absolute; right: 0; bottom: 0; padding: 0 5px; background: rgba(255, 255, 255, .5); color: #000; white-space: nowrap; }
.improve { font-weight: 600; }

.section-head { display: flex; align-items: center; justify-content: space-between; margin: var(--block) 0; }
.section-head h2 { font-size: 18px; font-weight: 500; color: #111827; }

/* Stop timeline */
.stops li { display: grid; grid-template-columns: var(--line) 1fr; column-gap: 16px; position: relative; }
.stops li::before {
  content: "";
  grid-column: 1;
  grid-row: 1 / 3;
  justify-self: center;
  width: 2px;
  margin: 37px 0 -8px;
  background: #d1d5db;
}
.node {
  grid-column: 1;
  grid-row: 1;
  display: grid;
  place-items: center;
  width: var(--line);
  height: var(--line);
  margin-top: 12px;
  border-radius: 50%;
  background: #000;
  color: #fff;
  font-weight: 600;
}
.card {
  grid-column: 2;
  display: flex;
  align-items: flex-start;
  padding: 11px 15px;
  border: 1px solid #e5e7eb;
  border-radius: 6px;
}
.panel-view .card { padding-left: 16px; }
.panel-edit .card { align-items: center; }
.info { flex: 1; min-width: 0; display: grid; gap: 2px; white-space: nowrap; }
.info h3 { font-size: var(--label); font-weight: 400; line-height: var(--line); }
.chips { display: flex; gap: 4px; }
.chips span { padding: 0 10px; border-radius: 12px; background: #f3f4f6; color: #1f2937; font-weight: 500; }
.times p, .row, .leg { display: flex; gap: 5px; }
.appt { text-decoration: underline; text-underline-offset: 4px; text-decoration-thickness: 1px; text-decoration-skip-ink: none; }
.ok { color: #12805c; }
.status { padding: 0 9px; border-radius: 4px; background: #f3f4f6; color: #1f2937; font-weight: 500; }
.leg { grid-column: 2; align-items: center; height: 28px; color: #6b7280; }
.panel-view .leg { height: 30px; }

.anchor { position: relative; }
.popover {
  position: absolute;
  z-index: 2;
  left: 29px;
  bottom: calc(100% + 7px);
  display: grid;
  gap: 12px;
  width: 261px;
  padding: 14px 16px;
  border: 1px solid #eceef0;
  border-radius: 8px;
  background: #fff;
  box-shadow: 0 12px 24px rgba(17, 24, 39, .14);
}
.popover b { display: block; font-weight: 500; color: #111827; }
.pair { display: flex; justify-content: space-between; }
.ruled { padding-top: 15px; border-top: 1px solid #d1d5db; margin-top: 2px; }
.hand { position: absolute; z-index: 3; left: 125px; top: 5px; }

.grip { position: relative; display: flex; width: 36px; padding-left: 1px; }
.grip .hand { left: 2px; top: 4px; }
.tip {
  position: absolute;
  z-index: 2;
  left: 10px;
  bottom: calc(100% + 10px);
  padding: 4px 8px;
  border-radius: 6px;
  background: #000;
  box-shadow: 0 4px 8px rgba(17, 24, 39, .15);
  color: #fff;
  font-size: 14px;
  font-weight: 500;
  white-space: nowrap;
  transform: translateX(-50%);
}

/* Edit sheet */
.sheet {
  display: flex;
  flex-direction: column;
  width: min(672px, 35vw);
  margin: 1px 0 23px;
  overflow: hidden;
  border-radius: 14px;
  background: #fff;
  box-shadow: 0 0 1px rgba(31, 41, 55, .4), 0 16px 32px rgba(17, 24, 39, .14);
}
.sheet-foot { display: flex; justify-content: flex-end; gap: 16px; padding: 15px 16px 16px; border-top: 1px solid #e5e7eb; }
```
